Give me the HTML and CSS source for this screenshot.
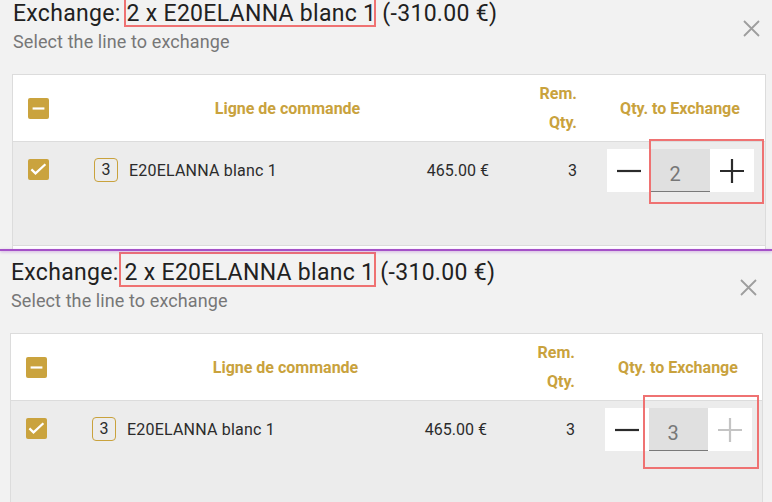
FILE: index.html
```html
<!DOCTYPE html>
<html lang="en">
<head>
<meta charset="utf-8">
<title>Exchange</title>
<link rel="stylesheet" href="styles.css">
</head>
<body>
<div class="shot shot--a">
  <section class="panel">
    <header class="panel-head">
      <div class="titles">
        <h1 class="title">Exchange: <span class="hl">2 x E20ELANNA blanc 1</span> (-310.00 €)</h1>
        <p class="subtitle">Select the line to exchange</p>
      </div>
      <button class="close" aria-label="Close"><svg width="17" height="17" viewBox="0 0 17 17"><path d="M1 1L16 16M16 1L1 16" stroke="#9e9e9e" stroke-width="1.8" fill="none"/></svg></button>
    </header>
    <div class="card">
      <div class="grid head">
        <div class="c-check"><span class="cb"><svg width="21" height="21" viewBox="0 0 21 21"><path d="M4.6 10.5H16.4" stroke="#fff" stroke-width="2.2"/></svg></span></div>
        <div class="c-line">Ligne de commande</div>
        <div class="c-rem">Rem.<br>Qty.</div>
        <div class="c-qty">Qty. to Exchange</div>
      </div>
      <div class="grid row">
        <div class="c-check cell"><span class="cb"><svg width="21" height="21" viewBox="0 0 21 21"><path d="M3.4 10.4L7.5 14.4L17.4 5.2" stroke="#fff" stroke-width="2.2" fill="none"/></svg></span></div>
        <div class="c-name cell"><span class="badge">3</span>E20ELANNA blanc 1</div>
        <div class="c-price cell">465.00 €</div>
        <div class="c-rem cell">3</div>
        <div class="c-qty cell">
          <div class="stepper">
            <button class="step"><svg width="24" height="24" viewBox="0 0 24 24"><path d="M0 12H24" stroke="#2b2b2b" stroke-width="2.2"/></svg></button>
            <input class="qty-input" value="2" readonly>
            <button class="step"><svg width="24" height="24" viewBox="0 0 24 24"><path d="M12 0V24M0 12H24" stroke="#2b2b2b" stroke-width="2.2"/></svg></button>
            <span class="mark mark--a"></span>
          </div>
        </div>
      </div>
      <div class="card-rest"></div>
    </div>
  </section>
</div>
<div class="divider"></div>
<div class="shot shot--b">
  <section class="panel">
    <header class="panel-head">
      <div class="titles">
        <h1 class="title">Exchange: <span class="hl hl--b">2 x E20ELANNA blanc 1</span> (-310.00 €)</h1>
        <p class="subtitle">Select the line to exchange</p>
      </div>
      <button class="close" aria-label="Close"><svg width="17" height="17" viewBox="0 0 17 17"><path d="M1 1L16 16M16 1L1 16" stroke="#9e9e9e" stroke-width="1.8" fill="none"/></svg></button>
    </header>
    <div class="card">
      <div class="grid head">
        <div class="c-check"><span class="cb"><svg width="21" height="21" viewBox="0 0 21 21"><path d="M4.6 10.5H16.4" stroke="#fff" stroke-width="2.2"/></svg></span></div>
        <div class="c-line">Ligne de commande</div>
        <div class="c-rem">Rem.<br>Qty.</div>
        <div class="c-qty">Qty. to Exchange</div>
      </div>
      <div class="grid row">
        <div class="c-check cell"><span class="cb"><svg width="21" height="21" viewBox="0 0 21 21"><path d="M3.4 10.4L7.5 14.4L17.4 5.2" stroke="#fff" stroke-width="2.2" fill="none"/></svg></span></div>
        <div class="c-name cell"><span class="badge">3</span>E20ELANNA blanc 1</div>
        <div class="c-price cell">465.00 €</div>
        <div class="c-rem cell">3</div>
        <div class="c-qty cell">
          <div class="stepper">
            <button class="step"><svg width="24" height="24" viewBox="0 0 24 24"><path d="M0 12H24" stroke="#2b2b2b" stroke-width="2.2"/></svg></button>
            <input class="qty-input" value="3" readonly>
            <button class="step" disabled><svg width="24" height="24" viewBox="0 0 24 24"><path d="M12 0V24M0 12H24" stroke="#c4c4c4" stroke-width="2.2"/></svg></button>
            <span class="mark mark--b"></span>
          </div>
        </div>
      </div>
      <div class="card-rest"></div>
    </div>
  </section>
</div>
</body>
</html>
```
FILE: styles.css
```css
html, body {
  margin: 0;
  padding: 0;
}
body {
  width: 772px;
  height: 502px;
  overflow: hidden;
  background: #f2f2f2;
  font-family: Roboto, "Liberation Sans", sans-serif;
  color: #2b2b2b;
}
.shot {
  overflow: hidden;
  box-sizing: border-box;
}
.shot--a {
  height: 249px;
}
.shot--b {
  height: 251px;
  padding-top: 8px;
}
.shot--b .panel {
  margin-left: -2px;
  margin-right: 3px;
}
.divider {
  position: relative;
  z-index: 2;
  height: 2px;
  background: #a552c8;
  box-shadow: 0 1px 3px rgba(165, 82, 200, 0.45);
}
.panel {
  padding: 0 6px 0 12px;
}
.panel-head {
  display: flex;
  justify-content: space-between;
  align-items: flex-start;
  padding-left: 1px;
}
.title {
  margin: 0;
  font-size: 23px;
  font-weight: 400;
  letter-spacing: 0.3px;
  line-height: 28px;
  color: #212121;
  white-space: nowrap;
}
.hl {
  display: inline-block;
  position: relative;
}
.hl::after {
  content: "";
  position: absolute;
  top: -6px;
  bottom: 1px;
  left: -3px;
  right: 0;
  border: 2px solid #ef7272;
}
.hl--b::after {
  top: -7px;
  bottom: 0;
  left: -6px;
  right: -2px;
}
.subtitle {
  margin: 3px 0 0;
  font-size: 18px;
  line-height: 22px;
  letter-spacing: 0.1px;
  color: #777;
}
.close {
  margin: 20px 6px 0 0;
  padding: 0;
  border: 0;
  background: none;
  width: 17px;
  height: 17px;
  display: block;
}
.close svg {
  display: block;
}
.card {
  margin-top: 21px;
  background: #fff;
  border: 1px solid #dcdcdc;
}
.grid {
  display: grid;
  grid-template-columns: 67px 320px 95px 100px 170px;
}
.head {
  height: 67px;
  box-sizing: border-box;
  border-bottom: 1px solid #dcdcdc;
  align-items: center;
  font-size: 16px;
  font-weight: 700;
  line-height: 29px;
  color: #c9a23d;
}
.c-check {
  padding-left: 15px;
  display: flex;
  align-items: center;
}
.cb {
  display: block;
  width: 21px;
  height: 21px;
  border-radius: 2px;
  background: #caa33e;
}
.cb svg {
  display: block;
}
.head .c-line {
  grid-column: span 2;
  text-align: center;
}
.c-rem {
  text-align: right;
  padding-right: 18px;
}
.head .c-qty {
  text-align: center;
}
.row {
  height: 104px;
  box-sizing: border-box;
  padding-top: 7px;
  background: #ececec;
  border-bottom: 1px solid #dcdcdc;
  align-items: start;
  font-size: 16px;
  color: #2b2b2b;
}
.cell {
  height: 43px;
  display: flex;
  align-items: center;
}
.row .c-check {
  padding-bottom: 2px;
  box-sizing: border-box;
}
.c-name {
  padding-left: 14px;
  letter-spacing: 0.2px;
}
.badge {
  width: 24px;
  height: 24px;
  box-sizing: border-box;
  border: 1px solid #c9a23d;
  border-radius: 4px;
  display: inline-flex;
  align-items: center;
  justify-content: center;
  font-size: 16px;
  margin-right: 11px;
  margin-bottom: 2px;
}
.c-price {
  justify-content: flex-end;
  padding-right: 6px;
}
.row .c-rem {
  justify-content: flex-end;
}
.row .c-qty {
  justify-content: center;
}
.stepper {
  position: relative;
  display: flex;
  width: 147px;
  height: 43px;
  background: #fff;
}
.step {
  width: 44px;
  height: 43px;
  padding: 0;
  border: 0;
  background: none;
  display: flex;
  align-items: center;
  justify-content: center;
}
.step svg {
  display: block;
}
.qty-input {
  width: 59px;
  height: 43px;
  box-sizing: border-box;
  margin: 0;
  border: 0;
  border-bottom: 1px solid #7a7a7a;
  padding: 8px 10px 0 0;
  background: #e0e0e0;
  font-family: Roboto, "Liberation Sans", sans-serif;
  font-size: 20px;
  color: #777;
  text-align: center;
  outline: none;
}
.mark {
  position: absolute;
  border: 2px solid #ef7272;
  box-sizing: border-box;
  pointer-events: none;
}
.mark--a {
  left: 42px;
  top: -10px;
  width: 115px;
  height: 65px;
}
.mark--b {
  left: 38px;
  top: -13px;
  width: 116px;
  height: 74px;
}
.card-rest {
  height: 40px;
  background: #fff;
}
```
